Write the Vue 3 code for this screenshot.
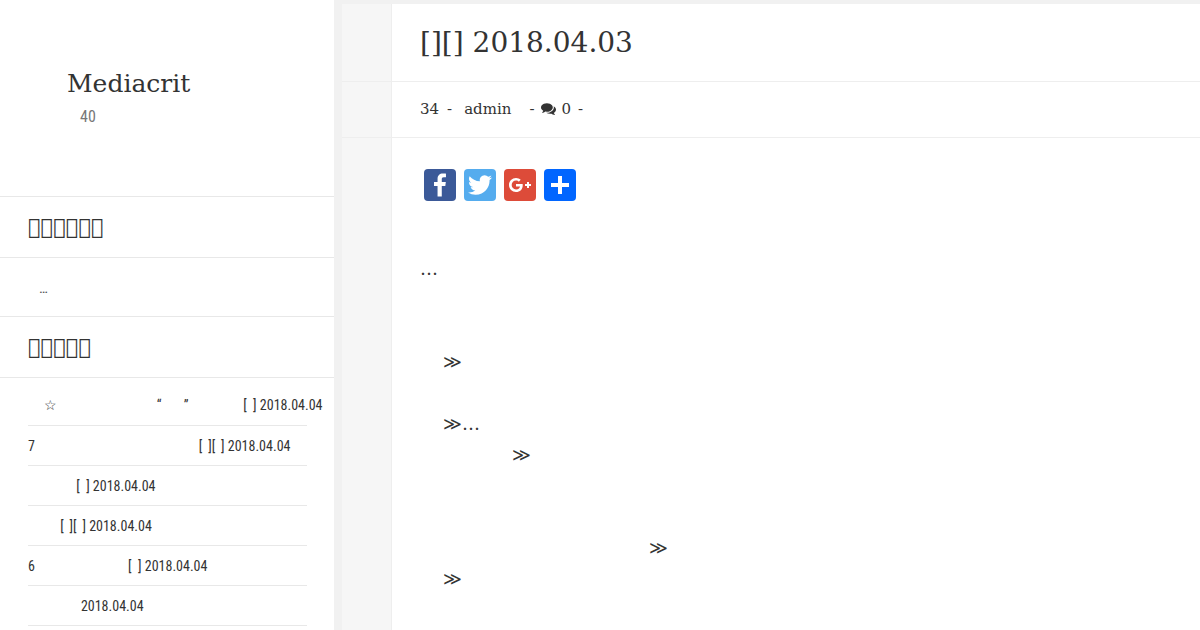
<script setup>
const sp = (n) => ' '.repeat(n)

// rows of the recent posts widget: blank runs are kept as plain spaces
const recent = [
  { text: sp(5) + '☆' + sp(31) + '“' + sp(7) + '”' + sp(17) + '[  ] 2018.04.04', first: true },
  { text: '7' + sp(51) + '[ \u2009][ \u2009] 2018.04.04' },
  { text: sp(15) + '[  ] 2018.04.04' },
  { text: sp(10) + '[ \u2009][ \u2009] 2018.04.04' },
  { text: '6' + sp(29) + '[  ] 2018.04.04' },
  { text: sp(16) + '\u200a2018.04.04' }
]

const lines = ['…', '', '', sp(4) + '≫', '', sp(4) + '≫…', sp(16) + '≫', '', '', sp(40) + '≫', sp(4) + '≫']
</script>

<template>
  <div class="page">
    <aside class="sidebar">
      <header class="brand">
        <h1 class="brand-name">Mediacrit</h1>
        <p class="brand-sub">40</p>
      </header>
      <h2 class="widget-title">&#xE000;&#xE000;&#xE000;&#xE000;&#xE000;&#xE000;</h2>
      <p class="widget-text">…</p>
      <h2 class="widget-title">&#xE000;&#xE000;&#xE000;&#xE000;&#xE000;</h2>
      <ul class="recent">
        <li v-for="(item, i) in recent" :key="i" :class="{ first: item.first }">{{ item.text }}</li>
      </ul>
    </aside>

    <main class="main">
      <div class="row">
        <div class="gutter"></div>
        <h1 class="post-title">[][] 2018.04.03</h1>
      </div>
      <div class="row">
        <div class="gutter"></div>
        <div class="post-meta">
          <span>34</span><span class="dash">-</span><span class="author">admin</span><span class="dash wide">-</span>
          <svg class="comment-icon" viewBox="0 0 1792 1792"><path fill="#333" d="M1408 768q0 139-94 257t-256.5 186.5-353.5 68.5q-86 0-176-16-124 88-278 128-36 9-86 16h-3q-11 0-20.5-8t-11.5-21q-1-3-1-6.5t.5-6.5 2-6l2.5-5 3.5-5.5 4-5 4.5-5 4-4.5q5-6 23-25t26-29.5 22.5-29 25-38.5 20.5-44q-124-72-195-177t-71-224q0-139 94-257t256.5-186.5 353.5-68.5 353.5 68.5 256.5 186.5 94 257zm384 256q0 120-71 224.5t-195 176.5q10 24 20.5 44t25 38.5 22.5 29 26 29.5 23 25q1 1 4 4.5t4.5 5 4 5 3.5 5.5l2.5 5 2 6 .5 6.5-1 6.5q-3 14-13 22t-22 7q-50-7-86-16-154-40-278-128-90 16-176 16-271 0-472-132 58 4 88 4 161 0 309-45t264-129q125-92 192-212t67-254q0-77-23-152 129 71 204 178t75 230z"/></svg>
          <span>0</span><span class="dash last">-</span>
        </div>
      </div>
      <div class="row body-row">
        <div class="gutter"></div>
        <article class="post-body">
          <div class="share">
            <a class="share-btn fb"><svg viewBox="0 0 32 32"><path fill="#fff" d="M17.78 27.5V17.008h3.522l.527-4.09h-4.05v-2.61c0-1.182.33-1.99 2.023-1.99h2.166V4.66c-.375-.05-1.66-.16-3.155-.16-3.123 0-5.26 1.905-5.26 5.405v3.016h-3.53v4.09h3.53V27.5h4.223z"/></svg></a>
            <a class="share-btn tw"><svg viewBox="0 0 32 32"><path fill="#fff" d="M28 8.557a9.913 9.913 0 0 1-2.828.775 4.93 4.93 0 0 0 2.166-2.725 9.738 9.738 0 0 1-3.13 1.194 4.92 4.92 0 0 0-3.593-1.55 4.924 4.924 0 0 0-4.794 6.049c-4.09-.21-7.72-2.17-10.15-5.15a4.942 4.942 0 0 0-.665 2.477c0 1.71.87 3.214 2.19 4.1a4.968 4.968 0 0 1-2.23-.616v.06c0 2.39 1.7 4.38 3.952 4.83-.414.115-.85.174-1.297.174-.318 0-.626-.03-.928-.086a4.935 4.935 0 0 0 4.6 3.42 9.893 9.893 0 0 1-6.114 2.107c-.398 0-.79-.023-1.175-.068a13.953 13.953 0 0 0 7.55 2.213c9.056 0 14.01-7.507 14.01-14.013 0-.213-.005-.426-.015-.637.96-.695 1.795-1.56 2.455-2.55z"/></svg></a>
            <a class="share-btn gp"><svg viewBox="0 0 32 32"><path fill="#fff" d="M27 15h-2v-2h-2v2h-2v2h2v2h2v-2h2m-15-2v2.4h3.97c-.16 1.03-1.2 3.02-3.97 3.02-2.39 0-4.34-1.98-4.34-4.42s1.95-4.42 4.34-4.42c1.36 0 2.27.58 2.79 1.08l1.9-1.83C15.47 9.69 13.89 9 12 9c-3.87 0-7 3.13-7 7s3.13 7 7 7c4.04 0 6.72-2.84 6.72-6.84 0-.46-.05-.81-.11-1.16H12z"/></svg></a>
            <a class="share-btn add"><svg viewBox="0 0 32 32"><path fill="#fff" d="M14 7h4v18h-4z M7 14h18v4H7z"/></svg></a>
          </div>
          <div class="content">
            <div v-for="(line, i) in lines" :key="i" class="line">{{ line }}</div>
          </div>
        </article>
      </div>
    </main>
  </div>
</template>

<style>
html, body {
  margin: 0;
  background: #fff;
}
</style>

<style scoped>
.page {
  display: flex;
  width: 1200px;
  height: 630px;
  overflow: hidden;
  color: #333;
  font-family: "DejaVu Serif", serif;
}
.sidebar {
  width: 334px;
  flex: none;
}
.brand {
  height: 197px;
  box-sizing: border-box;
  padding: 67px 0 0 67px;
  border-bottom: 1px solid #e8e8e8;
}
.brand-name {
  margin: 0;
  font-size: 25px;
  font-weight: 400;
  line-height: 34px;
}
.brand-sub {
  margin: 6px 0 0 13px;
  font: 16px/20px Roboto, sans-serif;
  font-stretch: condensed;
  color: #777;
}
.widget-title {
  margin: 0;
  height: 61px;
  box-sizing: border-box;
  padding-left: 28px;
  font-size: 21px;
  font-weight: 400;
  line-height: 60px;
  border-bottom: 1px solid #e8e8e8;
}
.widget-text {
  margin: 0;
  height: 59px;
  box-sizing: border-box;
  padding-left: 39px;
  font: 15px/60px Roboto, sans-serif;
  font-stretch: condensed;
  border-bottom: 1px solid #e8e8e8;
  color: #555;
}
.recent {
  list-style: none;
  margin: 0 27px 0 28px;
  padding: 0;
  font: 14px/41px Roboto, sans-serif;
  font-stretch: condensed;
}
.recent li {
  height: 39px;
  white-space: pre;
  border-bottom: 1px solid #e8e8e8;
}
.recent li.first {
  height: 47px;
  line-height: 55px;
}
.main {
  flex: 1;
  display: flex;
  flex-direction: column;
  padding: 4px 0 0 8px;
  background: #f1f1f1;
}
.row {
  display: flex;
  background: #fff;
  border-bottom: 1px solid #eee;
}
.gutter {
  width: 49px;
  flex: none;
  background: #f6f6f6;
  border-right: 1px solid #eee;
}
.post-title {
  margin: 0;
  height: 77px;
  padding-left: 28px;
  font-size: 28px;
  font-weight: 400;
  line-height: 78px;
  white-space: pre;
}
.post-meta {
  display: flex;
  align-items: center;
  height: 53px;
  padding: 0 0 2px 28px;
  font-size: 15px;
}
.dash {
  margin: 0 7px 0 8px;
}
.dash.wide {
  margin-left: 18px;
}
.dash.last {
  margin-left: 7px;
}
.author {
  margin-left: 5px;
}
.comment-icon {
  width: 15px;
  height: 15px;
  margin-right: 5px;
}
.body-row {
  flex: 1;
  border-bottom: 0;
}
.post-body {
  flex: 1;
  padding: 31px 0 0 28px;
}
.share {
  display: flex;
  gap: 8px;
  padding-left: 4px;
}
.share-btn {
  display: block;
  width: 32px;
  height: 32px;
  border-radius: 4px;
}
.share-btn svg {
  display: block;
  width: 32px;
  height: 32px;
}
.fb { background: #3b5998; }
.tw { background: #55acee; }
.gp { background: #dd4b39; }
.add { background: #0166ff; }
.content {
  margin-top: 52px;
  font-size: 18px;
  line-height: 31px;
}
.line {
  height: 31px;
  white-space: pre;
}
</style>
